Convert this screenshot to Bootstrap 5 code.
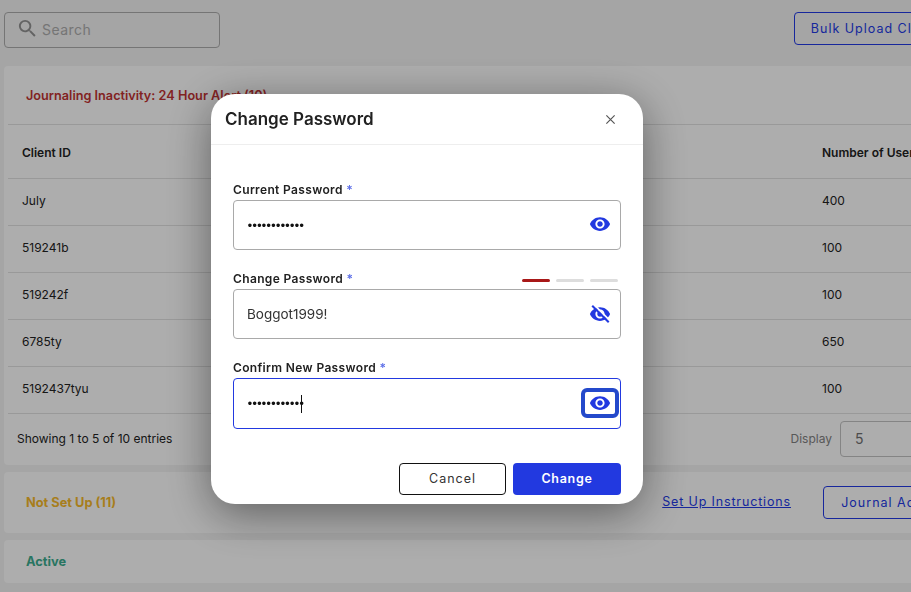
<!DOCTYPE html>
<html lang="en">
<head>
  <meta charset="UTF-8">
  <title>Clients</title>
  <link href="https://cdn.jsdelivr.net/npm/bootstrap@5.3.2/dist/css/bootstrap.min.css" rel="stylesheet">
  <style>
    body{background:#ececec;font-family:Inter,"Liberation Sans",sans-serif;color:#212121;overflow:hidden;height:592px}
    .page-wrap{width:958px;margin-left:4px}
    .top-bar{height:66px;padding-top:12px}
    .search-box{width:216px;height:36px;border:1px solid #a8a8a8;border-radius:4px;padding:0 11px;gap:3px;color:#a8a8a8;font-size:14px;letter-spacing:.45px}
    .search-box span{margin-top:-2px}
    .search-box svg{width:23px;height:23px;fill:#8f8f8f;margin-top:-3px}
    .outline-blue{border:1px solid #2239e0;border-radius:4px;color:#2239e0;background:none;font-size:12.5px;letter-spacing:1px;height:33px;padding:2px 16px 0;white-space:nowrap}
    .setup-row .outline-blue{padding:2px 15px 0 16px;width:134px}
    .panel{background:#f8f8f8;border-radius:4px;margin-bottom:7px}
    .panel-title{font-size:12.8px;font-weight:700}
    .title-red{color:#bb3232;font-size:12.7px;font-weight:600}
    .title-gold{color:#f0b429}
    .title-green{color:#3aa88c}
    .alert-head{height:58px;padding:1px 22px 0}
    .client-table{table-layout:fixed;width:946px;margin:0 0 0 4px;font-size:12px;--bs-table-bg:transparent;--bs-table-color:#212121}
    .client-table th,.client-table td{padding:0 14px;vertical-align:middle;border-color:#dcdcdc}
    .client-table th{height:54px;font-weight:600;border-top:1px solid #dcdcdc;padding-top:2px}
    .client-table td{height:47px;padding-bottom:2px}
    .table-foot{height:51px;padding:0 8px 2px 13px;font-size:12px}
    .display-label{color:#7e7e7e;font-size:12px;margin-right:8px}
    .display-select{width:114px;height:36px;border:1px solid #bdbdbd;border-radius:4px;padding-left:14px;font-size:14px;color:#6e6e6e;line-height:34px}
    .setup-row{height:61px;padding:0 5px 0 22px}
    .setup-link{color:#2239e0;font-size:12.5px;letter-spacing:.85px;margin-right:32px}
    .active-row{height:43px;padding:0 22px}
    .modal-backdrop.show.dim-layer{background:#000;opacity:.3;z-index:1050}
    .pw-dialog{width:432px;max-width:none;margin:94px 0 0 211px}
    .pw-content{border:0;border-radius:24px;box-shadow:0 10px 45px rgba(0,0,0,.45);height:410px}
    .pw-head{height:51px;padding:2px 14px 0;border-bottom:1px solid #eee}
    .pw-title{font-size:17px;font-weight:600;color:#212121}
    .x-btn{width:28px;height:28px;background:none;border:0;padding:0;margin:-2px 5px 0 0}
    .x-btn svg{width:11px;height:11px;stroke:#555;stroke-width:1.3}
    .pw-body{padding:37px 22px 0}
    .pw-label{font-size:12px;font-weight:600;letter-spacing:.35px;height:18px;line-height:15px;color:#212121;margin:0}
    .req{color:#5d6fe8}
    .pw-group{margin-bottom:21px;height:68px}
    .pw-field{height:50px;border:1px solid #a9a9a9;border-radius:4px;padding:0 0 0 13px}
    .pw-field.on{border-color:#2239e0;height:51px}
    .pw-field input{border:0;outline:0;flex:1;min-width:0;padding:0;background:none;font-size:13.5px;color:#333;font-family:Inter,sans-serif}
    .pw-field input[type=password]{font-family:"Liberation Mono",monospace;letter-spacing:-3.1px;color:#111;font-size:13px;padding-top:3px;margin-left:-1px}
    .eye-btn{width:38px;height:30px;margin:-1px 1px 0 0;background:none;border:0;padding:0;border-radius:5px;display:flex;align-items:center;justify-content:center}
    .eye-btn.eye-up{margin-top:-3px}
    .eye-btn svg{width:22px;height:22px;fill:#2239e0}
    .eye-btn.focused{border:4px solid #2449cb;border-radius:6px}
    .fake-caret{position:absolute;left:67px;top:16px;width:1px;height:18px;background:#111}
    .strength{gap:6px;margin:0 3px 0 0;padding-top:8px}
    .strength i{display:block;width:28px;height:3px;border-radius:2px;background:#ddd}
    .strength i.weak{background:#a81818}
    .pw-foot{position:absolute;right:22px;top:369px;gap:7px}
    .cancel-btn,.change-btn{height:32px;font-size:12.5px;letter-spacing:1px;border-radius:4px;padding:0}
    .cancel-btn{width:107px;border:1px solid #111;color:#333;background:#fff}
    .change-btn{width:108px;border:0;background:#2239e0;color:#fff;font-weight:600;letter-spacing:.7px}
  </style>
</head>
<body>

<div class="page-wrap">
  <div class="top-bar d-flex justify-content-between align-items-start">
    <div class="search-box d-flex align-items-center">
      <svg viewBox="0 0 24 24"><path d="M15.5 14h-.79l-.28-.27A6.47 6.47 0 0 0 16 9.5 6.5 6.5 0 1 0 9.5 16c1.61 0 3.09-.59 4.23-1.57l.27.28v.79l5 4.99L20.49 19l-4.99-5zm-6 0C7.01 14 5 11.99 5 9.5S7.01 5 9.5 5 14 7.01 14 9.5 11.99 14 9.5 14z"/></svg>
      <span>Search</span>
    </div>
    <button class="outline-blue" type="button">Bulk Upload Clients</button>
  </div>

  <div class="panel">
    <div class="alert-head d-flex align-items-center panel-title title-red">Journaling Inactivity: 24 Hour Alert (10)</div>
    <table class="table client-table mb-0">
      <colgroup><col style="width:800px"><col></colgroup>
      <thead><tr><th>Client ID</th><th>Number of Users</th></tr></thead>
      <tbody>
        <tr><td>July</td><td>400</td></tr>
        <tr><td>519241b</td><td>100</td></tr>
        <tr><td>519242f</td><td>100</td></tr>
        <tr><td>6785ty</td><td>650</td></tr>
        <tr><td>5192437tyu</td><td>100</td></tr>
      </tbody>
    </table>
    <div class="table-foot d-flex justify-content-between align-items-center">
      <span>Showing 1 to 5 of 10 entries</span>
      <div class="d-flex align-items-center">
        <span class="display-label">Display</span>
        <div class="display-select">5</div>
      </div>
    </div>
  </div>

  <div class="panel setup-row d-flex align-items-center">
    <span class="panel-title title-gold me-auto">Not Set Up (11)</span>
    <a class="setup-link" href="#">Set Up Instructions</a>
    <button class="outline-blue" type="button">Journal Admin</button>
  </div>

  <div class="panel active-row d-flex align-items-center">
    <span class="panel-title title-green">Active</span>
  </div>
</div>

<div class="modal-backdrop show dim-layer"></div>

<div class="modal d-block" tabindex="-1">
  <div class="modal-dialog pw-dialog">
    <div class="modal-content pw-content">
      <div class="modal-header pw-head">
        <h5 class="modal-title pw-title">Change Password</h5>
        <button class="x-btn ms-auto d-flex align-items-center justify-content-center" type="button" aria-label="Close">
          <svg viewBox="0 0 12 12"><path d="M1.5 1.5l9 9M10.5 1.5l-9 9" fill="none"/></svg>
        </button>
      </div>
      <div class="modal-body pw-body">
        <div class="pw-group">
          <label class="pw-label d-block">Current Password <span class="req">*</span></label>
          <div class="pw-field d-flex align-items-center">
            <input type="password" value="abcdefghijkl">
            <button class="eye-btn eye-up" type="button"><svg viewBox="0 0 24 24"><path d="M12 4.5C7 4.5 2.73 7.61 1 12c1.73 4.39 6 7.5 11 7.5s9.27-3.11 11-7.5c-1.73-4.39-6-7.5-11-7.5zM12 17c-2.76 0-5-2.24-5-5s2.24-5 5-5 5 2.24 5 5-2.24 5-5 5zm0-8c-1.66 0-3 1.34-3 3s1.34 3 3 3 3-1.34 3-3-1.34-3-3-3z"/></svg></button>
          </div>
        </div>
        <div class="pw-group">
          <div class="d-flex justify-content-between">
            <label class="pw-label">Change Password <span class="req">*</span></label>
            <div class="strength d-flex"><i class="weak"></i><i></i><i></i></div>
          </div>
          <div class="pw-field d-flex align-items-center">
            <input type="text" value="Boggot1999!">
            <button class="eye-btn" type="button"><svg viewBox="0 0 24 24"><path d="M12 4.5C7 4.5 2.73 7.61 1 12c1.73 4.39 6 7.5 11 7.5s9.27-3.11 11-7.5c-1.73-4.39-6-7.5-11-7.5zM12 17c-2.76 0-5-2.24-5-5s2.24-5 5-5 5 2.24 5 5-2.24 5-5 5zm0-8c-1.66 0-3 1.34-3 3s1.34 3 3 3 3-1.34 3-3-1.34-3-3-3z"/><path d="M5 1.5l18 18" stroke="#fff" stroke-width="2.2"/><path d="M3.5 3l18 18" stroke="#2239e0" stroke-width="2.2"/></svg></button>
          </div>
        </div>
        <div class="pw-group">
          <label class="pw-label d-block">Confirm New Password <span class="req">*</span></label>
          <div class="pw-field on d-flex align-items-center position-relative">
            <input type="password" value="abcdefghijkl">
            <span class="fake-caret"></span>
            <button class="eye-btn focused" type="button"><svg viewBox="0 0 24 24"><path d="M12 4.5C7 4.5 2.73 7.61 1 12c1.73 4.39 6 7.5 11 7.5s9.27-3.11 11-7.5c-1.73-4.39-6-7.5-11-7.5zM12 17c-2.76 0-5-2.24-5-5s2.24-5 5-5 5 2.24 5 5-2.24 5-5 5zm0-8c-1.66 0-3 1.34-3 3s1.34 3 3 3 3-1.34 3-3-1.34-3-3-3z"/></svg></button>
          </div>
        </div>
      </div>
      <div class="pw-foot d-flex">
        <button class="cancel-btn" type="button">Cancel</button>
        <button class="change-btn" type="button">Change</button>
      </div>
    </div>
  </div>
</div>

<script src="https://cdn.jsdelivr.net/npm/bootstrap@5.3.2/dist/js/bootstrap.bundle.min.js"></script>
</body>
</html>
